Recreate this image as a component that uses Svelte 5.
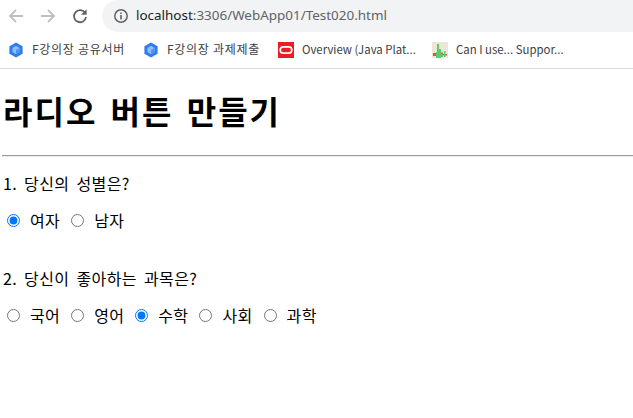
<script>
  const bookmarks = [
    { label: 'F강의장 공유서버', icon: 'hex', kind: 'ko' },
    { label: 'F강의장 과제제출', icon: 'hex', kind: 'ko' },
    { label: 'Overview (Java Plat...', icon: 'oracle', kind: 'en' },
    { label: 'Can I use... Suppor...', icon: 'chart', kind: 'en' }
  ];
  const subjects = ['국어', '영어', '수학', '사회', '과학'];
</script>

<div class="browser">
  <div class="toolbar">
    <div class="navs">
      <svg viewBox="0 0 16 16" width="16" height="16"><path d="M15 8H2.4M8 2 2 8l6 6" fill="none" stroke="#bdc1c6" stroke-width="1.8"/></svg>
      <svg viewBox="0 0 16 16" width="16" height="16"><path d="M1 8h12.6M8 2l6 6-6 6" fill="none" stroke="#bdc1c6" stroke-width="1.8"/></svg>
      <svg viewBox="0 0 16 16" width="16" height="16"><path d="M13 4.8A6 6 0 1 0 14 9" fill="none" stroke="#5f6368" stroke-width="1.8"/><path d="M14.6 1.2v5.6H9z" fill="#5f6368"/></svg>
    </div>
    <div class="address">
      <svg viewBox="0 0 16 16" width="16" height="16"><circle cx="8" cy="8" r="6.2" fill="none" stroke="#5f6368" stroke-width="1.5"/><path d="M8 7v4.4M8 4.4v1.5" stroke="#5f6368" stroke-width="1.6"/></svg>
      <span class="url"><span class="host">localhost</span>:3306/WebApp01/Test020.html</span>
    </div>
  </div>
  <div class="bookmarks">
    {#each bookmarks as b}
      <div class="bookmark">
        {#if b.icon === 'hex'}
          <svg viewBox="0 0 16 16" width="16" height="16"><path d="M8 .5 14.6 4.2v7.6L8 15.5 1.4 11.8V4.2z" fill="#2f7bf0"/><path d="M8 3.8 11.6 5.9v4.2L8 12.2 4.4 10.1V5.9z" fill="#8fbcfb"/><path d="M8 8 11.6 5.9v4.2L8 12.2z" fill="#4f92f5"/></svg>
        {:else if b.icon === 'oracle'}
          <svg viewBox="0 0 16 16" width="16" height="16"><rect width="16" height="16" fill="#ed1c24"/><rect x="2.2" y="4.8" width="11.6" height="6.4" rx="3.2" fill="none" stroke="#fff" stroke-width="1.7"/></svg>
        {:else}
          <svg viewBox="0 0 16 16" width="16" height="16"><rect width="16" height="16" fill="#ece6d6"/><path d="M1 11h3v3H1zM9 10.500h2v3H9zM11 12h4v1.500h-4z" fill="#d9534f"/><path d="M4 10h1v6H4zM5 2h2v14H5zM7 7h2v9H7zM9 12h2v3H9zM12 9h1.500v6H12z" fill="#5ccb6a"/></svg>
        {/if}
        <span class="bm-label {b.kind}">{b.label}</span>
      </div>
    {/each}
  </div>
</div>

<main>
  <h1>라디오 버튼 만들기</h1>
  <hr />
  <p>1. 당신의 성별은?</p>
  <div class="options">
    <input type="radio" name="gender" id="f" checked /><label for="f">여자</label>
    <input type="radio" name="gender" id="m" /><label for="m">남자</label>
  </div>
  <p class="second">2. 당신이 좋아하는 과목은?</p>
  <div class="options">
    {#each subjects as s, i}
      <input type="radio" name="subject" id={'s' + i} checked={s === '수학'} /><label for={'s' + i}>{s}</label>
    {/each}
  </div>
</main>

<style>
  :global(body) {
    margin: 0;
    background: #fff;
    font-family: "Noto Sans CJK KR", "Noto Sans", sans-serif;
    overflow: hidden;
  }
  .browser {
    height: 68px;
    border-bottom: 1px solid #dadce0;
  }
  .toolbar {
    display: flex;
    height: 32px;
  }
  .navs {
    width: 102px;
    display: flex;
    align-items: center;
    padding: 0 0 0 8px;
    gap: 16px;
    box-sizing: border-box;
  }
  .address {
    flex: 1;
    background: #f1f3f4;
    border-radius: 16px 0 0 16px;
    display: flex;
    align-items: center;
    padding-left: 11px;
    gap: 7px;
  }
  .url {
    font-family: "Noto Sans", sans-serif;
    font-size: 13.45px;
    line-height: 18px;
    padding-bottom: 2px;
    color: #5f6368;
  }
  .host { color: #202124; }
  .bookmarks {
    display: flex;
    height: 36px;
    align-items: center;
    padding-left: 8px;
    gap: 17px;
  }
  .bookmark {
    display: flex;
    align-items: center;
    gap: 8px;
  }
  .bm-label {
    font-size: 12px;
    line-height: 16px;
    padding-bottom: 3px;
    color: #3c4043;
    white-space: nowrap;
  }
  .ko { width: 94px; letter-spacing: 0.7px; }
  .en { width: 113px; font-size: 11.4px; }
  h1 {
    font-size: 32px;
    font-weight: 700;
    line-height: 46px;
    margin: 18px 0 22px 3px;
    letter-spacing: 2px;
    word-spacing: 4px;
    color: #000;
  }
  hr {
    margin: 0 0 0 2px;
    border: 0;
    border-top: 1px solid #9a9a9a;
    border-bottom: 1px solid #eee;
  }
  p {
    margin: 14px 0 0 3px;
    font-size: 16px;
    letter-spacing: 0.4px;
    word-spacing: 3px;
    line-height: 24px;
    color: #000;
  }
  .second { margin-top: 34px; }
  .options {
    display: flex;
    align-items: center;
    margin: 13px 0 0 0;
    height: 24px;
    font-size: 16px;
    letter-spacing: 0.35px;
  }
  input {
    margin: 0 0 0 7px;
    width: 13px;
    height: 13px;
    accent-color: #0075ff;
  }
  label { margin: 0 4px 0 10px; }
</style>
